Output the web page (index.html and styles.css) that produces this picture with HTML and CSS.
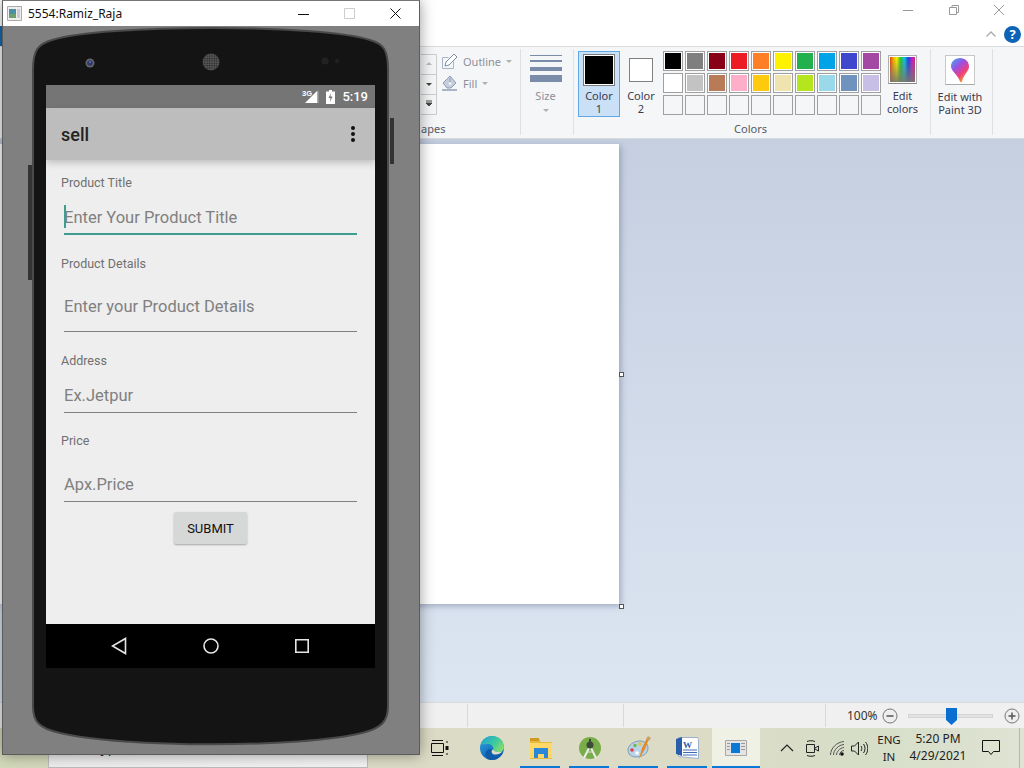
FILE: index.html
```html
<!DOCTYPE html>
<html lang="en">
<head>
  <meta charset="UTF-8">
  <title>5554:Ramiz_Raja</title>
  <link rel="stylesheet" href="styles.css">
</head>
<body>

  <!-- paint window behind the emulator -->
  <div class="paint">
    <div class="paint-title">
      <svg class="win-btn" width="14" height="14" viewBox="0 0 14 14"><path d="M2 7.500h10" stroke="#999" fill="none"/></svg>
      <svg class="win-btn" width="14" height="14" viewBox="0 0 14 14"><path d="M2.500 4.500h7v7h-7zM5 4.500v-2h6.500v7h-2" stroke="#999" fill="none"/></svg>
      <svg class="win-btn" width="14" height="14" viewBox="0 0 14 14"><path d="M2 2l10 10M12 2L2 12" stroke="#999" fill="none"/></svg>
    </div>
    <div class="paint-tabs">
      <div class="file-tab"></div>
      <svg class="tabs-chevron" width="12" height="8" viewBox="0 0 12 8"><path d="M1.500 6.500l4.500-4.500 4.500 4.500" stroke="#aaa" stroke-width="1.300" fill="none"/></svg>
      <div class="help">?</div>
    </div>

    <div class="ribbon">
      <div class="group group-shapes">
        <div class="group-main">
          <div class="scroller">
            <svg width="16" height="61" viewBox="0 0 16 61">
              <path d="M0 .5h15.500v60H0M0 20.500h15.500M0 40.500h15.500" stroke="#ccc" fill="none"/>
              <path d="M5 11l3-3 3 3z" fill="#bbb"/>
              <path d="M5 29h6l-3 3z" fill="#444"/>
              <path d="M5 47h6M5 49h6l-3 3z" stroke="#444" stroke-width="1" fill="#444"/>
            </svg>
          </div>
          <div class="outline-fill">
            <div class="tool-row">
              <svg width="16" height="16" viewBox="0 0 16 16"><path d="M.5 4.500h6M.5 4.500v11h11v-7" stroke="#a9b4c8" fill="none"/><path d="M3 13l1-4 8-8 3 3-8 8z" fill="#fff" stroke="#7b8cab"/></svg>
              <span>Outline</span><i class="caret"></i>
            </div>
            <div class="tool-row">
              <svg width="16" height="16" viewBox="0 0 16 16"><path d="M1 8l7-7 6 7-5 5H5z" fill="#c5cedd" stroke="#8d9bb3"/><path d="M0 14h15v2H0z" fill="#a9b4c8"/><path d="M8 3v5" stroke="#8d9bb3"/><circle cx="8" cy="8.500" r="1.300" fill="#fff"/></svg>
              <span>Fill</span><i class="caret"></i>
            </div>
          </div>
        </div>
        <div class="group-name">apes</div>
      </div>

      <div class="group group-size">
        <div class="size-lines"><i class="w1"></i><i class="w2"></i><i class="w3"></i><i class="w4"></i></div>
        <div class="size-label">Size</div>
        <i class="caret caret-size"></i>
      </div>

      <div class="group group-colors">
        <div class="group-main">
          <div class="color-btn color-active"><div class="color-box box-big"><b class="c-black"></b></div><span>Color<br>1</span></div>
          <div class="color-btn"><div class="color-box box-small"><b class="c-white"></b></div><span>Color<br>2</span></div>
          <div class="swatches">
            <i style="--c:#000000"></i><i style="--c:#7f7f7f"></i><i style="--c:#880015"></i><i style="--c:#ed1c24"></i><i style="--c:#ff7f27"></i><i style="--c:#fff200"></i><i style="--c:#22b14c"></i><i style="--c:#00a2e8"></i><i style="--c:#3f48cc"></i><i style="--c:#a349a4"></i>
            <i style="--c:#ffffff"></i><i style="--c:#c3c3c3"></i><i style="--c:#b97a57"></i><i style="--c:#ffaec9"></i><i style="--c:#ffc90e"></i><i style="--c:#efe4b0"></i><i style="--c:#b5e61d"></i><i style="--c:#99d9ea"></i><i style="--c:#7092be"></i><i style="--c:#c8bfe7"></i>
            <i></i><i></i><i></i><i></i><i></i><i></i><i></i><i></i><i></i><i></i>
          </div>
          <div class="edit-colors">
            <div class="rainbow"></div>
            <span>Edit<br>colors</span>
          </div>
        </div>
        <div class="group-name">Colors</div>
      </div>

      <div class="group group-3d">
        <div class="icon-3d">
          <svg width="20" height="26" viewBox="0 0 20 26">
            <defs><linearGradient id="drop" x1="0" y1="0" x2=".7" y2="1"><stop offset="0" stop-color="#35b4f0"/><stop offset=".4" stop-color="#9a50e4"/><stop offset=".72" stop-color="#f0407a"/><stop offset="1" stop-color="#f5b023"/></linearGradient></defs>
            <path d="M10 1c5 0 9 3.500 9 8.500 0 5-5 7-7 15-.5 1-1.500 1-2 0C8 18 1 14 1 9.500 1 4.500 5 1 10 1z" fill="url(#drop)"/>
          </svg>
        </div>
        <span>Edit with<br>Paint 3D</span>
      </div>
    </div>

    <div class="workspace">
      <div class="sheet"><i class="handle handle-right"></i><i class="handle handle-corner"></i></div>
    </div>

    <div class="statusbar">
      <div class="st-cell st-a"></div>
      <div class="st-cell st-b"></div>
      <div class="st-cell st-c"></div>
      <div class="zoom">
        <span>100%</span>
        <svg width="16" height="16" viewBox="0 0 16 16"><circle cx="8" cy="8" r="7" fill="#eee" stroke="#777"/><path d="M4.500 8h7" stroke="#555" stroke-width="1.500"/></svg>
        <div class="slider"><svg class="thumb" width="11" height="17" viewBox="0 0 11 17"><path d="M0 0h11v12l-5.500 5L0 12z" fill="#0a6fd0"/></svg></div>
        <svg width="16" height="16" viewBox="0 0 16 16"><circle cx="8" cy="8" r="7" fill="#eee" stroke="#777"/><path d="M4.500 8h7M8 4.500v7" stroke="#555" stroke-width="1.500"/></svg>
      </div>
    </div>
  </div>

  <!-- taskbar -->
  <div class="taskbar">
    <div class="search">
      <svg width="15" height="15" viewBox="0 0 15 15"><circle cx="9" cy="6" r="5" fill="none" stroke="#222"/><path d="M5.500 9.500L1 14" stroke="#222" stroke-width="1.300"/></svg>
      <span>Type here to search</span>
    </div>
    <div class="task task-view">
      <svg width="18" height="16" viewBox="0 0 18 16"><path d="M.5 3.500h12v9H.5zM1 .5h11M1 15.500h11" stroke="#111" fill="none"/><path d="M15 2h2M15 14h2" stroke="#111"/><path d="M14.500 6h3v4h-3z" fill="#111"/></svg>
    </div>
    <div class="task">
      <svg width="24" height="24" viewBox="0 0 24 24">
        <defs>
          <linearGradient id="edgeBlue" x1="0" y1="0" x2=".6" y2="1"><stop offset="0" stop-color="#2fa8e4"/><stop offset="1" stop-color="#0c58ac"/></linearGradient>
          <linearGradient id="edgeGreen" x1="0" y1="0" x2="1" y2=".6"><stop offset="0" stop-color="#1f9fd6"/><stop offset=".6" stop-color="#3cc8a0"/><stop offset="1" stop-color="#7ddc70"/></linearGradient>
        </defs>
        <circle cx="12" cy="12" r="12" fill="url(#edgeBlue)"/>
        <path d="M1 8C3 3 7 0 12.500 0 19 0 24 5 24 11.500c0 3-2.500 4.500-5.500 4.500-2.500 0-5-1-5-2.500 0-3-2-5.500-5.500-5.500C5 8 3 9 1 8z" fill="url(#edgeGreen)"/>
        <path d="M13.500 13.500c0 1.500 2.500 2.500 5 2.500 1.500 0 3-.4 4-1.300-1 2.600-4 3.800-7 3.800-3 0-4.500-2-4-3.500.3-1 1-1.500 2-1.500z" fill="#dcdcc8"/>
        <path d="M11.500 15c-.5 2 .5 4.500 3 5.500 2 .8 4 .5 5.500-.2-2 2.300-5 3.700-8 3.700-1 0-2-.2-3-.5-3-1.500-4-4-3.500-6.500.5-2 2.500-4 5-4 1 0 1.500.5 1 2.500z" fill="#0f5aa8"/>
      </svg>
    </div>
    <div class="task task-on">
      <svg width="22" height="22" viewBox="0 0 22 22"><path d="M0 2h9l2 3h11v17H0z" fill="#e8b93c"/><path d="M0 1h9v3H0z" fill="#d09a20"/><path d="M0 6h22v15H0z" fill="#ffd868"/><path d="M4 11h14v10h-4v-4H8v4H4z" fill="#2b88d8"/></svg>
    </div>
    <div class="task task-on">
      <svg width="22" height="22" viewBox="0 0 22 22"><circle cx="11" cy="11" r="11" fill="#79ad4a"/><path d="M5 21l5-10M17 21l-5-10" stroke="#eee" stroke-width="2" fill="none"/><path d="M7 15h8" stroke="#ddd"/><circle cx="11" cy="8" r="3.500" fill="#3c4a3a"/><path d="M10 2h2v5h-2z" fill="#3c4a3a"/></svg>
    </div>
    <div class="task task-on">
      <svg width="24" height="24" viewBox="0 0 24 24">
        <path d="M1 14c0-5 6-9 12-9 5 0 8 3 8 7 0 6-6 9-12 9-5 0-8-3-8-7z" fill="#b9d2e8" stroke="#7d9cb5"/>
        <circle cx="5" cy="14" r="1.800" fill="#e04040"/><circle cx="8" cy="9.500" r="1.800" fill="#6cbb4a"/><circle cx="13" cy="8" r="1.800" fill="#f0c030"/><circle cx="10" cy="17" r="1.800" fill="#fff"/>
        <path d="M12 23l3-11 5-10 2 1-4 10z" fill="#e58a20"/><path d="M19 3l2-3 3 2-2 3z" fill="#c9a070"/>
      </svg>
    </div>
    <div class="task task-on">
      <svg width="24" height="24" viewBox="0 0 24 24"><path d="M2.500 1.500h19l1 2v19l-20-2z" fill="#fff" stroke="#9fb0cc"/><path d="M0 3l6-2v19l-6-2z" fill="#2a5dab"/><path d="M7 14h14M7 16.500h14M7 19h14" stroke="#3c6cb5"/><text x="7" y="12" class="word-w">W</text></svg>
    </div>
    <div class="task task-on task-active">
      <svg width="22" height="16" viewBox="0 0 22 16"><path d="M.5.500h21v15H.5z" fill="#e4e4e4" stroke="#a8a8a8"/><path d="M6 3h9v10H6z" fill="#0a78d7"/><path d="M2 3.500h3M2 6.500h3M2 9.500h3M16 3.500h4M16 6.500h4M16 9.500h4" stroke="#999"/></svg>
    </div>
    <div class="tray">
      <svg class="tray-up" width="14" height="8" viewBox="0 0 14 8"><path d="M1 7l6-6 6 6" stroke="#222" stroke-width="1.200" fill="none"/></svg>
      <svg class="tray-meet" width="13" height="17" viewBox="0 0 13 17"><path d="M1 1.500c2-1 6-1 8 0M1 15.500c2 1 6 1 8 0" stroke="#222" fill="none"/><path d="M.5 4.500h8v8h-8z" fill="none" stroke="#222"/><path d="M9 8l3.500-2v5L9 9" fill="none" stroke="#222"/></svg>
      <svg class="tray-wifi" width="15" height="15" viewBox="0 0 15 15"><path d="M.5 14C.5 7 7 1 14 .5M3.500 14c0-5 5-10 10.500-10.500M6.500 14c0-3 3-7 7.500-7.500M9.500 14c0-2 2-4.500 4.500-4.500" stroke="#555" fill="none"/><circle cx="12" cy="13" r="1.800" fill="#111"/></svg>
      <svg class="tray-sound" width="17" height="15" viewBox="0 0 17 15"><path d="M.5 5h3l4-4v13l-4-4h-3z" fill="none" stroke="#222"/><path d="M10 5c1 1.500 1 3.500 0 5M12.500 3c2 2.500 2 6.500 0 9M14.500 1c3 3.500 3 9.500 0 13" stroke="#222" fill="none"/></svg>
      <div class="lang">ENG<br>IN</div>
      <div class="clock">5:20 PM<br>4/29/2021</div>
      <svg class="action" width="18" height="16" viewBox="0 0 18 16"><path d="M.5.500h17v11h-6l-2.500 3-2.500-3h-6z" fill="none" stroke="#111"/></svg>
      <i class="show-desktop"></i>
    </div>
  </div>

  <!-- emulator window -->
  <div class="emulator">
    <div class="emu-title">
      <svg width="15" height="15" viewBox="0 0 15 15"><path d="M.5.500h14v14H.5z" fill="#eee" stroke="#aaa"/><path d="M2 3h7v9H2z" fill="#4d8fa5"/><path d="M2 8h7v4H2z" fill="#6fa06c"/><path d="M10 3h3v9h-3z" fill="#ccc"/></svg>
      <span class="emu-name">5554:Ramiz_Raja</span>
      <svg class="emu-btn" width="11" height="11" viewBox="0 0 11 11"><path d="M0 6.500h11" stroke="#111"/></svg>
      <svg class="emu-btn" width="11" height="11" viewBox="0 0 11 11"><path d="M.5.500h10v10H.5z" stroke="#ccc" fill="none"/></svg>
      <svg class="emu-btn" width="11" height="11" viewBox="0 0 11 11"><path d="M.5.500l10 10M10.500.500l-10 10" stroke="#111" fill="none"/></svg>
    </div>
    <div class="emu-body">
      <svg class="skin" width="418" height="729" viewBox="0 0 418 729">
        <defs>
          <pattern id="mesh" width="2.400" height="2.400" patternUnits="userSpaceOnUse"><rect width="2.400" height="2.400" fill="#555"/><circle cx="1.200" cy="1.200" r=".7" fill="#1c1c1c"/></pattern>
        </defs>
        <path d="M26 139h4v115h-4zM388 92h4v46h-4z" fill="#333"/>
        <path d="M31 44C31 24 36 18 50 14 100-2 320-2 368 14c14 4 18 10 18 30v636c0 15-6 22-26 27-60 15-240 15-302 0-22-5-27-12-27-27z" fill="#141414" stroke="#4a4a4a" stroke-width="2"/>
        <circle cx="88" cy="37" r="4.500" fill="#666"/><circle cx="88" cy="37" r="2.800" fill="#30386e"/><circle cx="88" cy="36" r="1" fill="#5a6ad0"/>
        <circle cx="209" cy="36" r="8.500" fill="url(#mesh)"/>
        <circle cx="323" cy="35" r="3.500" fill="#222"/><circle cx="335" cy="35" r="2" fill="#222"/>
      </svg>
      <div class="screen">
        <div class="android-status">
          <svg width="17" height="15" viewBox="0 0 17 15"><path d="M15 2v12H3z" fill="#fff"/><path d="M15 2h1.500v12H15z" fill="#aaa"/><text x="0" y="7" class="net">3G</text></svg>
          <svg width="9" height="14" viewBox="0 0 9 14"><path d="M3 0h3v1.500h3V14H0V1.500h3z" fill="#fff"/><path d="M5 3L2.500 8H4.500L4 12l2.500-5.500H4.500z" fill="#777"/></svg>
          <span>5:19</span>
        </div>
        <div class="appbar">
          <span>sell</span>
          <svg width="4" height="16" viewBox="0 0 4 16"><circle cx="2" cy="2" r="2"/><circle cx="2" cy="8" r="2"/><circle cx="2" cy="14" r="2"/></svg>
        </div>
        <form class="sell-form">
          <label class="field-label">Product Title</label>
          <div class="input-wrap">
            <input class="text-in in-title" type="text" placeholder="Enter Your Product Title">
            <i class="caret-line"></i>
          </div>
          <label class="field-label">Product Details</label>
          <input class="text-in in-details" type="text" placeholder="Enter your Product Details">
          <label class="field-label">Address</label>
          <input class="text-in in-address" type="text" placeholder="Ex.Jetpur">
          <label class="field-label">Price</label>
          <input class="text-in in-price" type="text" placeholder="Apx.Price">
          <button class="submit" type="button">SUBMIT</button>
        </form>
        <div class="navbar">
          <svg width="16" height="18" viewBox="0 0 16 18"><path d="M14.500 1.500v15L1.500 9z" fill="none" stroke="#e6e6e6" stroke-width="1.600"/></svg>
          <svg width="16" height="16" viewBox="0 0 16 16"><circle cx="8" cy="8" r="7" fill="none" stroke="#e6e6e6" stroke-width="1.600"/></svg>
          <svg width="14" height="14" viewBox="0 0 14 14"><path d="M.8.800h12.400v12.400H.8z" fill="none" stroke="#e6e6e6" stroke-width="1.600"/></svg>
        </div>
      </div>
    </div>
  </div>

</body>
</html>
```

FILE: styles.css
```css
* { box-sizing: border-box; }
html, body { margin: 0; height: 100%; }
body { width: 1024px; height: 768px; position: relative; overflow: hidden; font-family: "Noto Sans", "Open Sans", sans-serif; background: #fff; }

/* paint */
.paint { position: absolute; inset: 0; display: flex; flex-direction: column; height: 728px; }
.paint-title { height: 26px; background: #fff; display: flex; justify-content: flex-end; align-items: center; gap: 31.500px; padding: 0 18px 6px 0; }
.paint-tabs { height: 20px; background: #fff; display: flex; align-items: center; justify-content: flex-end; gap: 7px; padding: 0 3px 4px 0; }
.file-tab { width: 60px; height: 20px; background: #1568b0; margin: 4px auto 0 0; }
.help { width: 17px; height: 17px; border-radius: 50%; background: #0d63b5; color: #fff; font-size: 13px; font-weight: 700; line-height: 17px; text-align: center; }

.ribbon { height: 93px; display: flex; padding-left: 420px; background: #f5f6f7; border-top: 1px solid #dadbdc; border-bottom: 1px solid #d9dade; font-size: 11px; color: #3c3c50; }
.group { border-right: 1px solid #dfe0e2; margin: 2px 0 3px; position: relative; display: flex; flex-direction: column; }
.group-main { display: flex; flex: 1; }
.group-name { text-align: center; height: 18px; line-height: 23px; color: #555a6a; }
.group-shapes { width: 101px; }
.group-shapes .group-name { text-align: left; padding-left: 1px; }
.scroller { width: 16px; margin: 5px 0 0 1px; height: 61px; }
.outline-fill { margin: 4px 0 0 5px; display: flex; flex-direction: column; gap: 6px; }
.tool-row { display: flex; align-items: center; gap: 5px; height: 16px; color: #8d8f9a; }
.caret { display: inline-block; width: 0; height: 0; border: 3px solid transparent; border-top: 3px solid #b0b0b0; border-bottom: 0; margin-left: 0; }

.group-size { width: 53px; align-items: center; padding-right: 3px; }
.size-lines { width: 32px; margin-top: 6px; display: flex; flex-direction: column; gap: 4px; }
.size-lines i { display: block; background: #7b8cab; }
.w1 { height: 1px; } .w2 { height: 2px; } .w3 { height: 4px; margin-top: 1px; } .w4 { height: 7px; }
.size-label { margin-top: 6px; color: #8d8f9a; }
.caret-size { margin-top: 6px; }

.group-colors { width: 357px; padding-left: 4px; }
.group-colors .group-name { padding-right: 7px; }
.color-btn { width: 42px; height: 66px; margin-top: 2px; display: flex; flex-direction: column; align-items: center; text-align: center; line-height: 13px; border: 1px solid transparent; }
.color-active { background: #c9e0f7; border-color: #62a8e5; }
.color-box { display: flex; border: 1px solid #7a7a7a; background: #fff; }
.color-box b { display: block; flex: 1; }
.box-big { width: 32px; height: 32px; padding: 1px; margin-top: 2px; }
.box-small { width: 24px; height: 24px; margin: 6px 0 4px; padding: 1px; border-color: #808080; }
.color-btn span { margin-top: 3px; }
.c-black { background: #000; } .c-white { background: #fff; }
.swatches { margin: 2px 0 0 1px; display: grid; grid-template-columns: repeat(10, 20px); grid-auto-rows: 20px; gap: 2px; height: 64px; }
.swatches i { display: block; border: 1px solid #a0a0a0; background: var(--c, transparent); box-shadow: inset 0 0 0 1px #fff; }
.swatches i:not([style]) { box-shadow: none; }
.edit-colors { width: 43px; text-align: center; line-height: 13px; margin-top: 6px; }
.rainbow { width: 29px; height: 29px; margin: 0 auto 5px; border: 1px solid #b0b0b0; border-bottom-color: #888; padding: 0; background: linear-gradient(to bottom, transparent 10%, rgba(120,120,110,.9) 95%), linear-gradient(to right, #e0201c, #f0a000, #f5f000, #30c030, #10c0e0, #2040e0, #c020c0, #e02060); box-shadow: inset 0 0 0 1px #fff; }

.group-3d { width: 62px; align-items: center; text-align: center; line-height: 13px; padding-right: 3px; }
.icon-3d { width: 30px; height: 30px; margin: 6px 0 5px; background: #fff; border: 1px solid #c8c8c8; border-bottom-color: #aaa; display: flex; align-items: center; justify-content: center; }

.workspace { flex: 1; background: linear-gradient(#c5cfe0, #dce6f2); padding: 5px 0 0 0; }
.sheet { width: 619px; height: 460px; background: #fff; box-shadow: 2px 2px 6px rgba(90,105,135,.45); position: relative; }
.handle { position: absolute; width: 5px; height: 5px; background: #fff; border: 1px solid #555; }
.handle-right { right: -5px; top: 228px; }
.handle-corner { right: -5px; bottom: -5px; }

.statusbar { height: 26px; background: #f0f0f0; border-top: 1px solid #d9d9d9; display: flex; padding-left: 420px; font-size: 12px; }
.st-cell { border-right: 1px solid #d9d9d9; margin: 1px 0 1px; }
.st-a { width: 48px; } .st-b { width: 156px; } .st-c { width: 202px; }
.zoom { display: flex; align-items: center; padding-left: 21px; color: #333; }
.zoom span { width: 35px; }
.slider { width: 85px; height: 4px; margin: 0 11px 0 10px; background: #e2e4e4; border: 1px solid #d4d4d4; position: relative; }
.thumb { position: absolute; left: 37px; top: -7px; }

/* taskbar */
.taskbar { position: absolute; left: 0; right: 0; bottom: 0; height: 40px; display: flex; padding-left: 48px; background: linear-gradient(to right, #d3d9ba, #dcdcc6 30%, #dcdcc6 70%, #d6dec8 85%, #dfe3d3); font-size: 12px; color: #222; }
.search { width: 320px; height: 40px; background: linear-gradient(to right, #eeeeee, #f4f4f4); border: 1px solid #bbb; padding: 0 0 3px 9px; font-size: 14px; display: flex; align-items: center; gap: 20px; }
.task { width: 49px; height: 40px; display: flex; align-items: center; justify-content: center; padding-bottom: 1px; position: relative; }
.task-view { width: 99px; justify-content: flex-start; padding-left: 63px; }
.task-on::after { content: ""; position: absolute; left: 4px; right: 5px; bottom: 0; height: 2px; background: #0a78d7; }
.task-active { background: #f0f1e5; width: 48px; }
.task-active::after { left: 0; right: 0; }
.word-w { font: 700 9px "Liberation Serif", serif; fill: #2a5dab; }
.tray { margin-left: auto; display: flex; align-items: center; width: 264px; padding-left: 20px; position: relative; }
.tray-up { margin-right: 12px; }
.tray-meet { margin-right: 11px; }
.tray-wifi { margin-right: 6px; }
.tray-sound { margin-right: 2px; }
.lang { width: 38px; text-align: center; line-height: 17px; font-size: 11.500px; }
.clock { width: 60px; text-align: center; line-height: 17px; margin-bottom: 3px; }
.action { margin-left: 14px; }
.show-desktop { position: absolute; right: 4px; top: 0; bottom: 0; width: 1px; background: #b4b8a8; }

/* emulator */
.emulator { position: absolute; left: 2px; top: 0; width: 418px; height: 755px; background: #808080; box-shadow: 0 0 14px rgba(0,0,0,.4); border: 1px solid #5c5c5c; border-top-color: #777; }
.emu-title { height: 25px; background: #fff; display: flex; align-items: center; padding-left: 4px; font-size: 12px; color: #111; }
.emu-name { margin-left: 6px; width: 270px; flex: none; }
.emu-btn { margin-right: 35px; flex: none; }
.emu-btn:last-child { margin-right: 0; }
.emu-body { position: relative; padding: 59px 0 0 43px; }
.skin { position: absolute; left: -1px; top: 0; }

/* android screen */
.screen { position: relative; width: 329px; height: 583px; background: #eee; display: flex; flex-direction: column; font-family: Roboto, sans-serif; }
.android-status { height: 23px; background: #757575; color: #fff; display: flex; align-items: center; justify-content: flex-end; gap: 7px; padding-right: 7px; font-size: 13px; font-weight: 500; }
.net { font: 700 7.500px "Liberation Sans Narrow", "Liberation Sans", sans-serif; fill: #fff; }
.appbar { height: 52px; background: #bdbdbd; box-shadow: 0 3px 7px rgba(0,0,0,.2); display: flex; align-items: center; justify-content: space-between; padding: 0 20px 0 15px; font-size: 18px; font-weight: 500; color: #222; position: relative; }
.appbar svg { fill: #111; margin-bottom: 1px; }
.sell-form { flex: 1; display: flex; flex-direction: column; padding: 15px 18px 0 15px; }
.field-label { display: block; height: 15px; line-height: 15px; font-size: 12.500px; color: #707070; margin-top: 21px; }
.field-label:first-child { margin-top: 0; }
.in-address + .field-label { margin-top: 20px; }
.input-wrap { position: relative; display: flex; }
.text-in { display: block; width: 293px; margin-left: 3px; border: 0; border-bottom: 1px solid #808080; background: transparent; padding: 0 0 7px 0; font: 16.500px/20px Roboto, sans-serif; outline: none; }
.text-in::placeholder { color: #808080; opacity: 1; }
.in-title { height: 45px; border-bottom: 2px solid #3d9e90; padding-top: 18px; }
.in-details { height: 61px; padding-top: 25px; padding-bottom: 15px; }
.in-address { height: 45px; padding-top: 17px; }
.in-price { height: 54px; padding-top: 26px; }
.caret-line { position: absolute; left: 3px; top: 15px; width: 1.500px; height: 23px; background: #3d9e90; }
.submit { width: 73px; height: 32px; margin: 10px 0 0 113px; border: 0; border-radius: 2px; background: #d6d7d7; box-shadow: 0 1px 2px rgba(0,0,0,.3); font: 400 13px Roboto, sans-serif; color: #111; padding: 0; }
.navbar { height: 44px; margin-top: auto; background: #000; display: flex; align-items: center; justify-content: space-between; padding: 0 66px 0 65px; }
```
